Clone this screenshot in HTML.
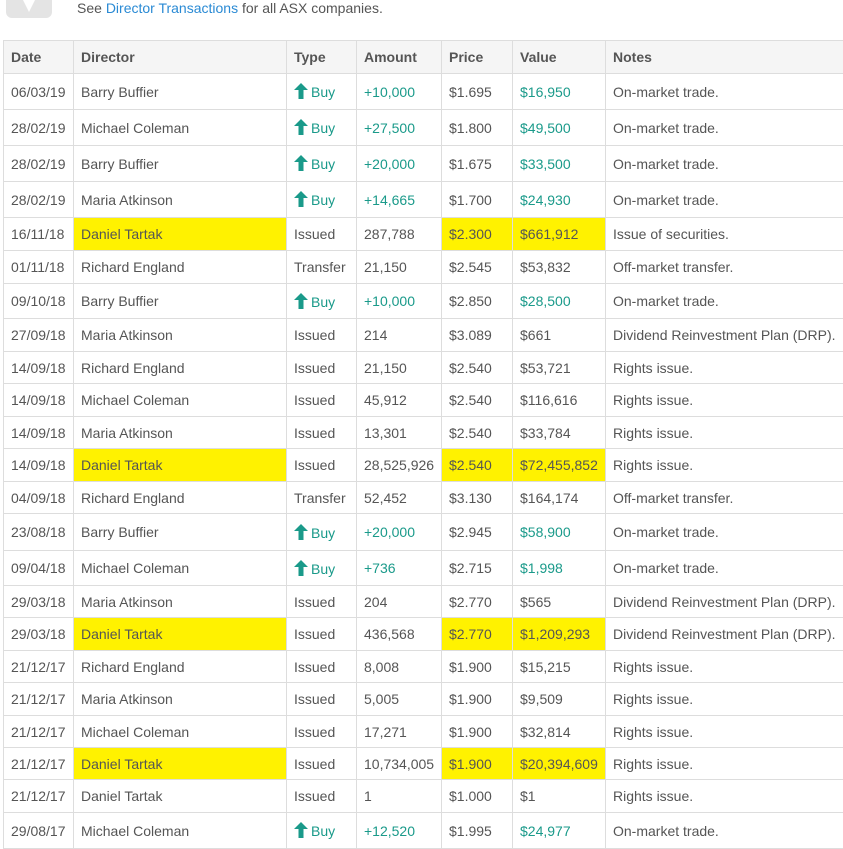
<!DOCTYPE html>
<html><head><meta charset="utf-8"><style>
body{margin:0;background:#fff;font-family:"Liberation Sans",sans-serif;font-size:14px;color:#555;width:843px;height:847px;overflow:hidden;position:relative}
.top{position:absolute;left:77px;top:0;font-size:14px;color:#555}
.top a{color:#2a8ad4;text-decoration:none}
.av{position:absolute;left:6px;top:-10px;width:46px;height:28px;background:#e4e4e4;border-radius:0 0 6px 6px}
.av:after{content:"";position:absolute;left:17px;top:10px;border-left:6px solid transparent;border-right:6px solid transparent;border-top:12px solid #fff}
table{position:absolute;left:3px;top:40px;border-collapse:collapse;table-layout:fixed;width:850px}
td,th{border:1px solid #ddd;padding:0 0 0 7px;text-align:left;white-space:nowrap;overflow:hidden}
th{background:#f5f5f5;font-weight:bold;height:32px;color:#555}
.g{color:#1a9a8a}
.y{background:#fff200}
svg{vertical-align:-2px;margin-right:3px}
</style></head><body>
<div class="av"></div>
<div class="top">See <a>Director Transactions</a> for all ASX companies.</div>
<table>
<colgroup><col style="width:70px"><col style="width:213px"><col style="width:70px"><col style="width:85px"><col style="width:71px"><col style="width:93px"><col style="width:248px"></colgroup>
<tr><th>Date</th><th>Director</th><th>Type</th><th>Amount</th><th>Price</th><th>Value</th><th>Notes</th></tr>
<tr style="height:36px"><td>06/03/19</td><td>Barry Buffier</td><td class="g"><svg width="14" height="16" viewBox="0 0 14 16"><path d="M7 0L14 7H9.5V16H4.5V7H0Z" fill="#1a9a8a"/></svg>Buy</td><td class="g">+10,000</td><td>$1.695</td><td class="g">$16,950</td><td>On-market trade.</td></tr>
<tr style="height:36px"><td>28/02/19</td><td>Michael Coleman</td><td class="g"><svg width="14" height="16" viewBox="0 0 14 16"><path d="M7 0L14 7H9.5V16H4.5V7H0Z" fill="#1a9a8a"/></svg>Buy</td><td class="g">+27,500</td><td>$1.800</td><td class="g">$49,500</td><td>On-market trade.</td></tr>
<tr style="height:36px"><td>28/02/19</td><td>Barry Buffier</td><td class="g"><svg width="14" height="16" viewBox="0 0 14 16"><path d="M7 0L14 7H9.5V16H4.5V7H0Z" fill="#1a9a8a"/></svg>Buy</td><td class="g">+20,000</td><td>$1.675</td><td class="g">$33,500</td><td>On-market trade.</td></tr>
<tr style="height:36px"><td>28/02/19</td><td>Maria Atkinson</td><td class="g"><svg width="14" height="16" viewBox="0 0 14 16"><path d="M7 0L14 7H9.5V16H4.5V7H0Z" fill="#1a9a8a"/></svg>Buy</td><td class="g">+14,665</td><td>$1.700</td><td class="g">$24,930</td><td>On-market trade.</td></tr>
<tr style="height:33px"><td>16/11/18</td><td class="y">Daniel Tartak</td><td>Issued</td><td>287,788</td><td class="y">$2.300</td><td class="y">$661,912</td><td>Issue of securities.</td></tr>
<tr style="height:33px"><td>01/11/18</td><td>Richard England</td><td>Transfer</td><td>21,150</td><td>$2.545</td><td>$53,832</td><td>Off-market transfer.</td></tr>
<tr style="height:35px"><td>09/10/18</td><td>Barry Buffier</td><td class="g"><svg width="14" height="16" viewBox="0 0 14 16"><path d="M7 0L14 7H9.5V16H4.5V7H0Z" fill="#1a9a8a"/></svg>Buy</td><td class="g">+10,000</td><td>$2.850</td><td class="g">$28,500</td><td>On-market trade.</td></tr>
<tr style="height:33px"><td>27/09/18</td><td>Maria Atkinson</td><td>Issued</td><td>214</td><td>$3.089</td><td>$661</td><td>Dividend Reinvestment Plan (DRP).</td></tr>
<tr style="height:32px"><td>14/09/18</td><td>Richard England</td><td>Issued</td><td>21,150</td><td>$2.540</td><td>$53,721</td><td>Rights issue.</td></tr>
<tr style="height:33px"><td>14/09/18</td><td>Michael Coleman</td><td>Issued</td><td>45,912</td><td>$2.540</td><td>$116,616</td><td>Rights issue.</td></tr>
<tr style="height:32px"><td>14/09/18</td><td>Maria Atkinson</td><td>Issued</td><td>13,301</td><td>$2.540</td><td>$33,784</td><td>Rights issue.</td></tr>
<tr style="height:33px"><td>14/09/18</td><td class="y">Daniel Tartak</td><td>Issued</td><td>28,525,926</td><td class="y">$2.540</td><td class="y">$72,455,852</td><td>Rights issue.</td></tr>
<tr style="height:32px"><td>04/09/18</td><td>Richard England</td><td>Transfer</td><td>52,452</td><td>$3.130</td><td>$164,174</td><td>Off-market transfer.</td></tr>
<tr style="height:37px"><td>23/08/18</td><td>Barry Buffier</td><td class="g"><svg width="14" height="16" viewBox="0 0 14 16"><path d="M7 0L14 7H9.5V16H4.5V7H0Z" fill="#1a9a8a"/></svg>Buy</td><td class="g">+20,000</td><td>$2.945</td><td class="g">$58,900</td><td>On-market trade.</td></tr>
<tr style="height:35px"><td>09/04/18</td><td>Michael Coleman</td><td class="g"><svg width="14" height="16" viewBox="0 0 14 16"><path d="M7 0L14 7H9.5V16H4.5V7H0Z" fill="#1a9a8a"/></svg>Buy</td><td class="g">+736</td><td>$2.715</td><td class="g">$1,998</td><td>On-market trade.</td></tr>
<tr style="height:32px"><td>29/03/18</td><td>Maria Atkinson</td><td>Issued</td><td>204</td><td>$2.770</td><td>$565</td><td>Dividend Reinvestment Plan (DRP).</td></tr>
<tr style="height:33px"><td>29/03/18</td><td class="y">Daniel Tartak</td><td>Issued</td><td>436,568</td><td class="y">$2.770</td><td class="y">$1,209,293</td><td>Dividend Reinvestment Plan (DRP).</td></tr>
<tr style="height:32px"><td>21/12/17</td><td>Richard England</td><td>Issued</td><td>8,008</td><td>$1.900</td><td>$15,215</td><td>Rights issue.</td></tr>
<tr style="height:33px"><td>21/12/17</td><td>Maria Atkinson</td><td>Issued</td><td>5,005</td><td>$1.900</td><td>$9,509</td><td>Rights issue.</td></tr>
<tr style="height:32px"><td>21/12/17</td><td>Michael Coleman</td><td>Issued</td><td>17,271</td><td>$1.900</td><td>$32,814</td><td>Rights issue.</td></tr>
<tr style="height:32px"><td>21/12/17</td><td class="y">Daniel Tartak</td><td>Issued</td><td>10,734,005</td><td class="y">$1.900</td><td class="y">$20,394,609</td><td>Rights issue.</td></tr>
<tr style="height:33px"><td>21/12/17</td><td>Daniel Tartak</td><td>Issued</td><td>1</td><td>$1.000</td><td>$1</td><td>Rights issue.</td></tr>
<tr style="height:36px"><td>29/08/17</td><td>Michael Coleman</td><td class="g"><svg width="14" height="16" viewBox="0 0 14 16"><path d="M7 0L14 7H9.5V16H4.5V7H0Z" fill="#1a9a8a"/></svg>Buy</td><td class="g">+12,520</td><td>$1.995</td><td class="g">$24,977</td><td>On-market trade.</td></tr>
</table>
</body></html>
